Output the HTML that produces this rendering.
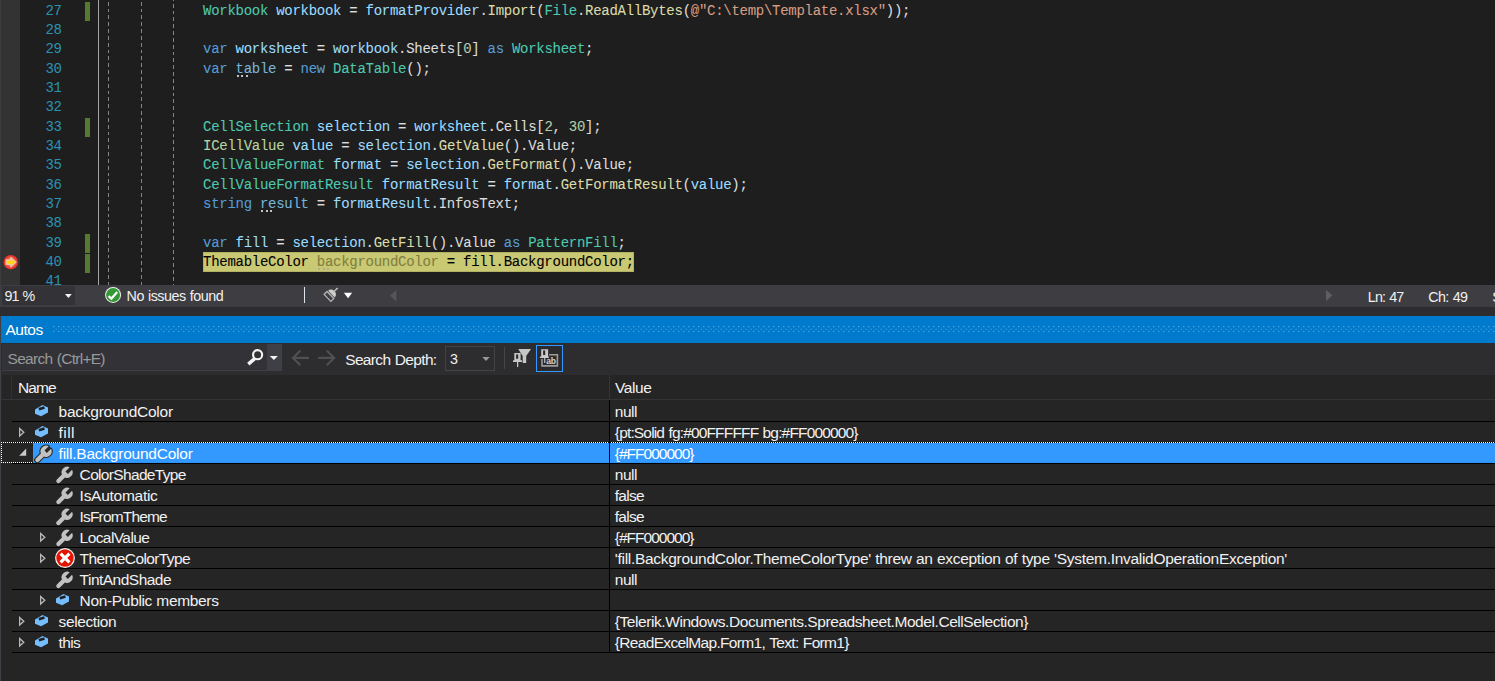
<!DOCTYPE html>
<html><head><meta charset="utf-8"><title>Autos</title>
<style>
html,body{margin:0;padding:0}
body{width:1495px;height:681px;overflow:hidden;position:relative;background:#252526;font-family:"Liberation Sans",sans-serif;color:#f1f1f1;font-size:15.5px}
div,span,svg{position:absolute;box-sizing:border-box}
.code{-webkit-text-stroke:0.08px currentColor;font-family:"Liberation Mono",monospace;font-size:14.0px;white-space:pre;height:20px;line-height:20px;letter-spacing:-0.274px}
.code span{position:static}
.ln{-webkit-text-stroke:0.05px currentColor;font-family:"Liberation Mono",monospace;font-size:14.0px;color:#2b91af;height:20px;line-height:20px;width:40px;text-align:right;left:21.7px;margin-top:0.3px;letter-spacing:-0.274px}
.t{white-space:pre;height:20px;line-height:20px;font-size:15.5px}
.s{white-space:pre;height:20px;line-height:20px;font-size:14.3px}
.sep{left:12px;right:0;height:1px;background:#000}
</style></head><body>

<div style="left:0;top:0;width:1495px;height:285px;background:#1e1e1e"></div>
<div style="left:0;top:0;width:20px;height:285px;background:#333334"></div>
<div style="left:0;top:0;width:1px;height:285px;background:#3c3c40"></div>
<div style="left:98px;top:0;width:1px;height:285px;background:#a5a5a5"></div>
<div style="left:108px;top:-4.83px;width:1px;height:289.83px;background:repeating-linear-gradient(to bottom,#848484 0,#848484 3.8px,transparent 3.8px,transparent 6.83px)"></div>
<div style="left:141px;top:-4.83px;width:1px;height:289.83px;background:repeating-linear-gradient(to bottom,#848484 0,#848484 3.8px,transparent 3.8px,transparent 6.83px)"></div>
<div style="left:173px;top:-2.83px;width:1px;height:287.83px;background:repeating-linear-gradient(to bottom,#848484 0,#848484 3.8px,transparent 3.8px,transparent 6.83px)"></div>
<div style="left:84.6px;top:2.0px;width:5.7px;height:19.0px;background:#577a31"></div>
<div style="left:84.6px;top:117.8px;width:5.7px;height:19.3px;background:#577a31"></div>
<div style="left:84.6px;top:234.0px;width:5.7px;height:19.3px;background:#577a31"></div>
<div style="left:84.6px;top:253.5px;width:5.7px;height:19.0px;background:#577a31"></div>
<div style="left:202.5px;top:252px;width:431.5px;height:20px;background:#c9c873;border:1px solid #b3b262"></div>
<div class="ln" style="top:0.80px">27</div>
<div class="code" style="left:203px;top:0.80px"><span style="color:#4ec9b0">Workbook</span><span style="color:#dcdcdc"> </span><span style="color:#9cdcfe">workbook</span><span style="color:#dcdcdc"> = </span><span style="color:#9cdcfe">formatProvider</span><span style="color:#dcdcdc">.</span><span style="color:#dcdcaa">Import</span><span style="color:#dcdcdc">(</span><span style="color:#4ec9b0">File</span><span style="color:#dcdcdc">.</span><span style="color:#dcdcaa">ReadAllBytes</span><span style="color:#dcdcdc">(</span><span style="color:#d69d85">@"C:\temp\Template.xlsx"</span><span style="color:#dcdcdc">));</span></div>
<div class="ln" style="top:19.80px">28</div>
<div class="ln" style="top:38.80px">29</div>
<div class="code" style="left:203px;top:38.80px"><span style="color:#569cd6">var</span><span style="color:#dcdcdc"> </span><span style="color:#9cdcfe">worksheet</span><span style="color:#dcdcdc"> = </span><span style="color:#9cdcfe">workbook</span><span style="color:#dcdcdc">.Sheets[</span><span style="color:#b5cea8">0</span><span style="color:#dcdcdc">] </span><span style="color:#569cd6">as</span><span style="color:#dcdcdc"> </span><span style="color:#4ec9b0">Worksheet</span><span style="color:#dcdcdc">;</span></div>
<div class="ln" style="top:58.80px">30</div>
<div class="code" style="left:203px;top:58.80px"><span style="color:#569cd6">var</span><span style="color:#dcdcdc"> </span><span style="color:#78b5d8">table</span><span style="color:#dcdcdc"> = </span><span style="color:#569cd6">new</span><span style="color:#dcdcdc"> </span><span style="color:#4ec9b0">DataTable</span><span style="color:#dcdcdc">();</span></div>
<div class="ln" style="top:77.80px">31</div>
<div class="ln" style="top:96.80px">32</div>
<div class="ln" style="top:116.80px">33</div>
<div class="code" style="left:203px;top:116.80px"><span style="color:#4ec9b0">CellSelection</span><span style="color:#dcdcdc"> </span><span style="color:#9cdcfe">selection</span><span style="color:#dcdcdc"> = </span><span style="color:#9cdcfe">worksheet</span><span style="color:#dcdcdc">.Cells[</span><span style="color:#b5cea8">2</span><span style="color:#dcdcdc">, </span><span style="color:#b5cea8">30</span><span style="color:#dcdcdc">];</span></div>
<div class="ln" style="top:135.80px">34</div>
<div class="code" style="left:203px;top:135.80px"><span style="color:#b8d7a3">ICellValue</span><span style="color:#dcdcdc"> </span><span style="color:#9cdcfe">value</span><span style="color:#dcdcdc"> = </span><span style="color:#9cdcfe">selection</span><span style="color:#dcdcdc">.</span><span style="color:#dcdcaa">GetValue</span><span style="color:#dcdcdc">().Value;</span></div>
<div class="ln" style="top:154.80px">35</div>
<div class="code" style="left:203px;top:154.80px"><span style="color:#4ec9b0">CellValueFormat</span><span style="color:#dcdcdc"> </span><span style="color:#9cdcfe">format</span><span style="color:#dcdcdc"> = </span><span style="color:#9cdcfe">selection</span><span style="color:#dcdcdc">.</span><span style="color:#dcdcaa">GetFormat</span><span style="color:#dcdcdc">().Value;</span></div>
<div class="ln" style="top:174.80px">36</div>
<div class="code" style="left:203px;top:174.80px"><span style="color:#4ec9b0">CellValueFormatResult</span><span style="color:#dcdcdc"> </span><span style="color:#9cdcfe">formatResult</span><span style="color:#dcdcdc"> = </span><span style="color:#9cdcfe">format</span><span style="color:#dcdcdc">.</span><span style="color:#dcdcaa">GetFormatResult</span><span style="color:#dcdcdc">(</span><span style="color:#9cdcfe">value</span><span style="color:#dcdcdc">);</span></div>
<div class="ln" style="top:193.80px">37</div>
<div class="code" style="left:203px;top:193.80px"><span style="color:#569cd6">string</span><span style="color:#dcdcdc"> </span><span style="color:#78b5d8">result</span><span style="color:#dcdcdc"> = </span><span style="color:#9cdcfe">formatResult</span><span style="color:#dcdcdc">.InfosText;</span></div>
<div class="ln" style="top:212.80px">38</div>
<div class="ln" style="top:232.80px">39</div>
<div class="code" style="left:203px;top:232.80px"><span style="color:#569cd6">var</span><span style="color:#dcdcdc"> </span><span style="color:#9cdcfe">fill</span><span style="color:#dcdcdc"> = </span><span style="color:#9cdcfe">selection</span><span style="color:#dcdcdc">.</span><span style="color:#dcdcaa">GetFill</span><span style="color:#dcdcdc">().Value </span><span style="color:#569cd6">as</span><span style="color:#dcdcdc"> </span><span style="color:#4ec9b0">PatternFill</span><span style="color:#dcdcdc">;</span></div>
<div class="ln" style="top:251.80px">40</div>
<div class="code" style="left:203px;top:251.80px"><span style="color:#000">ThemableColor </span><span style="color:#807f3f">backgroundColor</span><span style="color:#000"> = fill.BackgroundColor;</span></div>
<div class="ln" style="top:270.80px">41</div>
<div style="left:237px;top:75px;width:2px;height:2px;background:#c2c2c2"></div>
<div style="left:241px;top:75px;width:2px;height:2px;background:#c2c2c2"></div>
<div style="left:246px;top:75px;width:2px;height:2px;background:#c2c2c2"></div>
<div style="left:261px;top:210px;width:2px;height:2px;background:#c2c2c2"></div>
<div style="left:266px;top:210px;width:2px;height:2px;background:#c2c2c2"></div>
<div style="left:270px;top:210px;width:2px;height:2px;background:#c2c2c2"></div>
<div style="left:318px;top:268px;width:2px;height:2px;background:#b0af8c"></div>
<div style="left:323px;top:268px;width:2px;height:2px;background:#b0af8c"></div>
<div style="left:327px;top:268px;width:2px;height:2px;background:#b0af8c"></div>
<svg style="left:2px;top:254px" width="18" height="18" viewBox="0 0 18 18"><defs><radialGradient id="rg" cx="50%" cy="50%" r="50%"><stop offset="0.5" stop-color="#f4685c"/><stop offset="0.9" stop-color="#e8342c"/><stop offset="1" stop-color="#e0302a"/></radialGradient></defs><circle cx="8.75" cy="8.2" r="7.25" fill="url(#rg)"/><path d="M4.1 5.9H8.7V3.5L14.1 8.2L8.7 12.9V10.5H4.1Z" fill="#ffd61a" stroke="#f0c4ae" stroke-width="1.1" stroke-linejoin="round"/></svg>
<div style="left:0;top:285px;width:1495px;height:22px;background:#3e3e42"></div>
<div style="left:2px;top:286px;width:73px;height:19px;background:#333337"></div>
<div class="s" style="left:4.60px;top:285.8px;color:#f1f1f1;letter-spacing:-1.000px;word-spacing:1.000px">91 %</div>
<svg style="left:64px;top:292px" width="10" height="8" viewBox="64 292 10 8"><path d="M65 293.9H71.8L68.4 298Z" fill="#f4f4f4"/></svg>
<svg style="left:103px;top:285px" width="20" height="20" viewBox="103 285 20 20"><circle cx="113.05" cy="294.95" r="8.0" fill="#f0f0f0"/><circle cx="113.05" cy="294.95" r="7.0" fill="#339933"/><path d="M108.6 296.2L111.4 298.6L117.2 292.1" fill="none" stroke="#fff" stroke-width="2.2"/></svg>
<div class="s" style="left:126.60px;top:285.8px;color:#f1f1f1;letter-spacing:-0.458px;word-spacing:0.458px">No issues found</div>
<div style="left:303.7px;top:287px;width:1.3px;height:16px;background:#dde3ea"></div>
<svg style="left:318px;top:284px" width="40" height="24" viewBox="318 284 40 24"><g transform="translate(327 298.3) rotate(46)"><rect x="-4.85" y="-4.75" width="9.7" height="4.1" fill="none" stroke="#b4b4b4" stroke-width="1.3"/><path d="M-4.7 -6.1C-4.7 -8.9 -2.6 -10.3 0 -10.5C2.6 -10.3 4.7 -8.9 4.7 -6.1Z" fill="#cbcbcb"/><rect x="-0.75" y="-14.9" width="1.5" height="4.8" fill="#c0c0c0"/></g>
<path d="M343.9 292.8H352.2L348.05 298.2Z" fill="#fff"/></svg>
<svg style="left:389px;top:289px" width="9" height="14" viewBox="389 289 9 14"><path d="M396.4 290V301.5L390 295.75Z" fill="#565659"/></svg>
<svg style="left:1326px;top:290px" width="7" height="11" viewBox="0 0 7 11"><path d="M0 0V11L6.5 5.5Z" fill="#5e5e63"/></svg>
<div class="s" style="left:1367.80px;top:287px;color:#f1f1f1;letter-spacing:-0.825px;word-spacing:0.825px">Ln: 47</div>
<div class="s" style="left:1428.30px;top:287px;color:#f1f1f1;letter-spacing:-0.600px;word-spacing:0.600px">Ch: 49</div>
<div class="s" style="left:1492.2px;top:287px;color:#f1f1f1">S</div>
<div style="left:0;top:307px;width:1495px;height:9px;background:#2d2d30"></div>
<div style="left:0;top:316px;width:1px;height:365px;background:#3f3f46"></div>
<div style="left:1px;top:316px;width:1494px;height:27px;background:#007acc"></div>
<div class="t" style="left:5.50px;top:319.9px;color:#fff;letter-spacing:-0.475px">Autos</div>
<svg style="left:53px;top:325px" width="1442" height="9" viewBox="53 325 1442 9"><defs><pattern id="gp" x="53" y="326" width="5" height="20" patternUnits="userSpaceOnUse"><rect x="0.15" y="0" width="1.2" height="1.25" fill="#5aa9e0"/><rect x="2.6" y="2.6" width="1.3" height="1.3" fill="#3a95d8"/><rect x="0.15" y="4.8" width="1.2" height="1.25" fill="#52a3dd"/></pattern></defs><rect x="53" y="326" width="1442" height="7" fill="url(#gp)"/></svg>
<div style="left:1px;top:343px;width:1494px;height:32px;background:#2d2d30"></div>
<div style="left:2px;top:344px;width:280px;height:27px;background:#333337;border-bottom:1px solid #3e3e43"></div>
<div style="left:267px;top:344px;width:15px;height:27px;background:#3f3f46"></div>
<div class="t" style="left:7.60px;top:349.0px;color:#999;letter-spacing:-0.715px;word-spacing:0.715px">Search (Ctrl+E)</div>
<svg style="left:240px;top:340px" width="110" height="36" viewBox="240 340 110 36">
<circle cx="257.6" cy="354.7" r="4.55" fill="none" stroke="#f4f4f4" stroke-width="2.1"/>
<path d="M254.7 358.7L248.3 364.1" stroke="#f4f4f4" stroke-width="3.5"/>
<path d="M269.8 356H277.9L273.85 360.1Z" fill="#f4f4f4"/>
<path d="M308.8 357.9H293M300.4 350.6L292.9 357.9L300.4 365.2" fill="none" stroke="#505053" stroke-width="2.1"/>
<path d="M318.3 357.9H334M326.7 350.6L334.2 357.9L326.7 365.2" fill="none" stroke="#505053" stroke-width="2.1"/>
</svg>
<div class="t" style="left:345.20px;top:349.6px;color:#f1f1f1;letter-spacing:-0.645px;word-spacing:0.645px">Search Depth:</div>
<div style="left:445px;top:346px;width:50px;height:25px;background:#2d2d30;border:1px solid #434346"></div>
<div class="t" style="left:449.8px;top:348.7px;color:#f1f1f1;transform:scaleX(0.92);transform-origin:0 0">3</div>
<svg style="left:482px;top:357.2px" width="8" height="5" viewBox="0 0 8 5"><path d="M0.3 0H7.7L4 4Z" fill="#999"/></svg>
<div style="left:504px;top:347px;width:1px;height:22px;background:#46464a"></div>
<div style="left:536px;top:345px;width:27px;height:27px;border:1px solid #3399ff;background:#2b2b2d"></div>
<svg style="left:500px;top:340px" width="70" height="36" viewBox="500 340 70 36">
<g fill="#c6c6c6">
<path d="M518.2 349H531L526.2 355.9V363H522.7V355.9Z"/>
<path d="M514.3 353H520.6V360.2H522V362H513V360.2H514.3Z"/>
<rect x="517" y="362" width="1.25" height="5"/>
</g>
<rect x="516.1" y="354.4" width="2.1" height="4.4" fill="#2d2d30"/>
<path d="M549.2 354.8H557.4V365.9H542V359" fill="none" stroke="#9c9c9c" stroke-width="1.6"/>
<g fill="#cacaca">
<path d="M541.2 349.3H548.1V356.6H548.9V358H539.9V356.6H541.2Z"/>
<rect x="544.2" y="358" width="1.1" height="5"/>
</g>
<rect x="543.1" y="350.4" width="2.1" height="4.6" fill="#2b2b2d"/>
<text x="546.2" y="364.1" font-family="Liberation Sans, sans-serif" font-weight="bold" font-size="8.6" fill="#d0d0d0" letter-spacing="-0.3">ab</text>
</svg>
<div style="left:1px;top:375px;width:1494px;height:25px;background:#2d2d30"></div>
<div style="left:2px;top:375px;width:1493px;height:25px;background:#252526"></div>
<div style="left:2px;top:399px;width:1493px;height:1px;background:#353539"></div>
<div style="left:11px;top:375px;width:1px;height:24px;background:#303034"></div>
<div style="left:609px;top:375px;width:1px;height:24px;background:#353539"></div>
<div class="t" style="left:17.90px;top:377.6px;color:#f1f1f1;letter-spacing:-0.833px">Name</div>
<div class="t" style="left:615.00px;top:377.6px;color:#f1f1f1;letter-spacing:-0.425px">Value</div>
<svg style="left:35px;top:405px" width="14" height="12" viewBox="0 0 14 12"><path d="M7.5 0L13 2.6V7.4L6.1 11.2L0 8.8V4.4Z" fill="#75beff"/><path d="M3.9 4.2L9.5 2.5" stroke="#1e1e1e" stroke-width="2.7"/></svg>
<div class="t" style="left:58.60px;top:401.6px;color:#f1f1f1;letter-spacing:-0.257px">backgroundColor</div>
<div style="left:609px;top:400px;width:1px;height:21px;background:#000"></div>
<div class="t" style="left:614.80px;top:401.6px;color:#f1f1f1;letter-spacing:-0.467px">null</div>
<div class="sep" style="top:421px"></div>
<svg style="left:35px;top:426px" width="14" height="12" viewBox="0 0 14 12"><path d="M7.5 0L13 2.6V7.4L6.1 11.2L0 8.8V4.4Z" fill="#75beff"/><path d="M3.9 4.2L9.5 2.5" stroke="#1e1e1e" stroke-width="2.7"/></svg>
<svg style="left:19px;top:426.9px" width="7" height="11" viewBox="0 0 7 11"><path d="M0.6 1.4L4.8 5.2L0.6 9Z" fill="none" stroke="#b8b8b8" stroke-width="1.35"/></svg>
<div class="t" style="left:58.60px;top:422.6px;color:#f1f1f1;letter-spacing:0.400px">fill</div>
<div style="left:609px;top:421px;width:1px;height:21px;background:#000"></div>
<div class="t" style="left:614.80px;top:422.6px;color:#f1f1f1;letter-spacing:-0.839px;word-spacing:0.839px">{pt:Solid fg:#00FFFFFF bg:#FF000000}</div>
<div style="left:12px;top:442px;width:1483px;height:1px;background:#000"></div>
<div style="left:33px;top:443px;width:1462px;height:20px;background:#3399ff"></div>
<div style="left:1px;top:442px;width:1494px;height:1px;background:repeating-linear-gradient(to right,#fff 0,#fff 1px,transparent 1px,transparent 2px)"></div>
<div style="left:1px;top:462px;width:32px;height:1px;background:repeating-linear-gradient(to right,#fff 0,#fff 1px,transparent 1px,transparent 2px)"></div>
<div style="left:33px;top:462px;width:1462px;height:1px;background:repeating-linear-gradient(to right,#cc6600 0,#cc6600 1px,transparent 1px,transparent 2px)"></div>
<div style="left:1px;top:442px;width:1px;height:21px;background:repeating-linear-gradient(to bottom,#fff 0,#fff 1px,transparent 1px,transparent 2px)"></div>
<div class="sep" style="top:463px;background:#000"></div>
<svg style="left:33.5px;top:443.5px" width="20" height="20" viewBox="0 0 20 20"><rect transform="translate(3.4 16) rotate(-45)" x="11.70" y="-2.00" width="6.34" height="4.00" fill="#2b2b2b"/><path transform="translate(3.4 16) rotate(-45)" d="M0 -2.15 L7.13 -2.15 A5.6 5.6 0 0 1 17.64 -1.7 L11.700000000000001 -1.7 L11.700000000000001 1.7 L17.64 1.7 A5.6 5.6 0 0 1 7.13 2.15 L0 2.15 A2.15 2.15 0 0 1 0 -2.15Z" fill="#c2c2c2" stroke="#2b2b2b" stroke-width="2.2" paint-order="stroke" stroke-linejoin="round"/></svg>
<svg style="left:19px;top:448px" width="8" height="8" viewBox="0 0 8 8"><path d="M7.2 0.4V7.8H0.2Z" fill="#c8c8c8"/></svg>
<div class="t" style="left:58.60px;top:443.6px;color:#fff;letter-spacing:-0.237px">fill.BackgroundColor</div>
<div style="left:609px;top:442px;width:1px;height:21px;background:#000"></div>
<div class="t" style="left:614.80px;top:443.6px;color:#fff;letter-spacing:-1.000px">{#FF000000}</div>
<svg style="left:54.5px;top:464.5px" width="20" height="20" viewBox="0 0 20 20"><path transform="translate(3.4 16) rotate(-45)" d="M0 -2.15 L7.13 -2.15 A5.6 5.6 0 0 1 17.64 -1.7 L11.700000000000001 -1.7 L11.700000000000001 1.7 L17.64 1.7 A5.6 5.6 0 0 1 7.13 2.15 L0 2.15 A2.15 2.15 0 0 1 0 -2.15Z" fill="#c2c2c2"/></svg>
<div class="t" style="left:79.60px;top:464.6px;color:#f1f1f1;letter-spacing:-0.662px">ColorShadeType</div>
<div style="left:609px;top:463px;width:1px;height:21px;background:#000"></div>
<div class="t" style="left:614.80px;top:464.6px;color:#f1f1f1;letter-spacing:-0.467px">null</div>
<div class="sep" style="top:484px"></div>
<svg style="left:54.5px;top:485.5px" width="20" height="20" viewBox="0 0 20 20"><path transform="translate(3.4 16) rotate(-45)" d="M0 -2.15 L7.13 -2.15 A5.6 5.6 0 0 1 17.64 -1.7 L11.700000000000001 -1.7 L11.700000000000001 1.7 L17.64 1.7 A5.6 5.6 0 0 1 7.13 2.15 L0 2.15 A2.15 2.15 0 0 1 0 -2.15Z" fill="#c2c2c2"/></svg>
<div class="t" style="left:79.60px;top:485.6px;color:#f1f1f1;letter-spacing:-0.270px">IsAutomatic</div>
<div style="left:609px;top:484px;width:1px;height:21px;background:#000"></div>
<div class="t" style="left:614.80px;top:485.6px;color:#f1f1f1;letter-spacing:-0.750px">false</div>
<div class="sep" style="top:505px"></div>
<svg style="left:54.5px;top:506.5px" width="20" height="20" viewBox="0 0 20 20"><path transform="translate(3.4 16) rotate(-45)" d="M0 -2.15 L7.13 -2.15 A5.6 5.6 0 0 1 17.64 -1.7 L11.700000000000001 -1.7 L11.700000000000001 1.7 L17.64 1.7 A5.6 5.6 0 0 1 7.13 2.15 L0 2.15 A2.15 2.15 0 0 1 0 -2.15Z" fill="#c2c2c2"/></svg>
<div class="t" style="left:79.60px;top:506.6px;color:#f1f1f1;letter-spacing:-0.840px">IsFromTheme</div>
<div style="left:609px;top:505px;width:1px;height:21px;background:#000"></div>
<div class="t" style="left:614.80px;top:506.6px;color:#f1f1f1;letter-spacing:-0.750px">false</div>
<div class="sep" style="top:526px"></div>
<svg style="left:54.5px;top:527.5px" width="20" height="20" viewBox="0 0 20 20"><path transform="translate(3.4 16) rotate(-45)" d="M0 -2.15 L7.13 -2.15 A5.6 5.6 0 0 1 17.64 -1.7 L11.700000000000001 -1.7 L11.700000000000001 1.7 L17.64 1.7 A5.6 5.6 0 0 1 7.13 2.15 L0 2.15 A2.15 2.15 0 0 1 0 -2.15Z" fill="#c2c2c2"/></svg>
<svg style="left:40px;top:531.9px" width="7" height="11" viewBox="0 0 7 11"><path d="M0.6 1.4L4.8 5.2L0.6 9Z" fill="none" stroke="#b8b8b8" stroke-width="1.35"/></svg>
<div class="t" style="left:79.60px;top:527.6px;color:#f1f1f1;letter-spacing:-0.578px">LocalValue</div>
<div style="left:609px;top:526px;width:1px;height:21px;background:#000"></div>
<div class="t" style="left:614.80px;top:527.6px;color:#f1f1f1;letter-spacing:-1.000px">{#FF000000}</div>
<div class="sep" style="top:547px"></div>
<svg style="left:55px;top:547.5px" width="20" height="20" viewBox="0 0 20 20"><circle cx="10" cy="10" r="9.9" fill="#f6f6f6"/><circle cx="10" cy="10" r="8.7" fill="#e51400"/><path d="M5.6 5.6L14.4 14.4M14.4 5.6L5.6 14.4" stroke="#fff" stroke-width="3.2"/></svg>
<svg style="left:40px;top:552.9px" width="7" height="11" viewBox="0 0 7 11"><path d="M0.6 1.4L4.8 5.2L0.6 9Z" fill="none" stroke="#b8b8b8" stroke-width="1.35"/></svg>
<div class="t" style="left:79.60px;top:548.6px;color:#f1f1f1;letter-spacing:-0.608px">ThemeColorType</div>
<div style="left:609px;top:547px;width:1px;height:21px;background:#000"></div>
<div class="t" style="left:614.80px;top:548.6px;color:#f1f1f1;letter-spacing:-0.292px;word-spacing:0.292px">'fill.BackgroundColor.ThemeColorType' threw an exception of type 'System.InvalidOperationException'</div>
<div class="sep" style="top:568px"></div>
<svg style="left:54.5px;top:569.5px" width="20" height="20" viewBox="0 0 20 20"><path transform="translate(3.4 16) rotate(-45)" d="M0 -2.15 L7.13 -2.15 A5.6 5.6 0 0 1 17.64 -1.7 L11.700000000000001 -1.7 L11.700000000000001 1.7 L17.64 1.7 A5.6 5.6 0 0 1 7.13 2.15 L0 2.15 A2.15 2.15 0 0 1 0 -2.15Z" fill="#c2c2c2"/></svg>
<div class="t" style="left:79.60px;top:569.6px;color:#f1f1f1;letter-spacing:-0.518px">TintAndShade</div>
<div style="left:609px;top:568px;width:1px;height:21px;background:#000"></div>
<div class="t" style="left:614.80px;top:569.6px;color:#f1f1f1;letter-spacing:-0.467px">null</div>
<div class="sep" style="top:589px"></div>
<svg style="left:56px;top:594px" width="14" height="12" viewBox="0 0 14 12"><path d="M7.5 0L13 2.6V7.4L6.1 11.2L0 8.8V4.4Z" fill="#75beff"/><path d="M3.9 4.2L9.5 2.5" stroke="#1e1e1e" stroke-width="2.7"/></svg>
<svg style="left:40px;top:594.9px" width="7" height="11" viewBox="0 0 7 11"><path d="M0.6 1.4L4.8 5.2L0.6 9Z" fill="none" stroke="#b8b8b8" stroke-width="1.35"/></svg>
<div class="t" style="left:79.60px;top:590.6px;color:#f1f1f1;letter-spacing:-0.337px;word-spacing:0.337px">Non-Public members</div>
<div style="left:609px;top:589px;width:1px;height:21px;background:#000"></div>
<div class="sep" style="top:610px"></div>
<svg style="left:35px;top:615px" width="14" height="12" viewBox="0 0 14 12"><path d="M7.5 0L13 2.6V7.4L6.1 11.2L0 8.8V4.4Z" fill="#75beff"/><path d="M3.9 4.2L9.5 2.5" stroke="#1e1e1e" stroke-width="2.7"/></svg>
<svg style="left:19px;top:615.9px" width="7" height="11" viewBox="0 0 7 11"><path d="M0.6 1.4L4.8 5.2L0.6 9Z" fill="none" stroke="#b8b8b8" stroke-width="1.35"/></svg>
<div class="t" style="left:58.60px;top:611.6px;color:#f1f1f1;letter-spacing:-0.400px">selection</div>
<div style="left:609px;top:610px;width:1px;height:21px;background:#000"></div>
<div class="t" style="left:614.80px;top:611.6px;color:#f1f1f1;letter-spacing:-0.429px">{Telerik.Windows.Documents.Spreadsheet.Model.CellSelection}</div>
<div class="sep" style="top:631px"></div>
<svg style="left:35px;top:636px" width="14" height="12" viewBox="0 0 14 12"><path d="M7.5 0L13 2.6V7.4L6.1 11.2L0 8.8V4.4Z" fill="#75beff"/><path d="M3.9 4.2L9.5 2.5" stroke="#1e1e1e" stroke-width="2.7"/></svg>
<svg style="left:19px;top:636.9px" width="7" height="11" viewBox="0 0 7 11"><path d="M0.6 1.4L4.8 5.2L0.6 9Z" fill="none" stroke="#b8b8b8" stroke-width="1.35"/></svg>
<div class="t" style="left:58.60px;top:632.6px;color:#f1f1f1;letter-spacing:-0.667px">this</div>
<div style="left:609px;top:631px;width:1px;height:21px;background:#000"></div>
<div class="t" style="left:614.80px;top:632.6px;color:#f1f1f1;letter-spacing:-0.667px;word-spacing:0.667px">{ReadExcelMap.Form1, Text: Form1}</div>
<div class="sep" style="top:652px"></div>
</body></html>
